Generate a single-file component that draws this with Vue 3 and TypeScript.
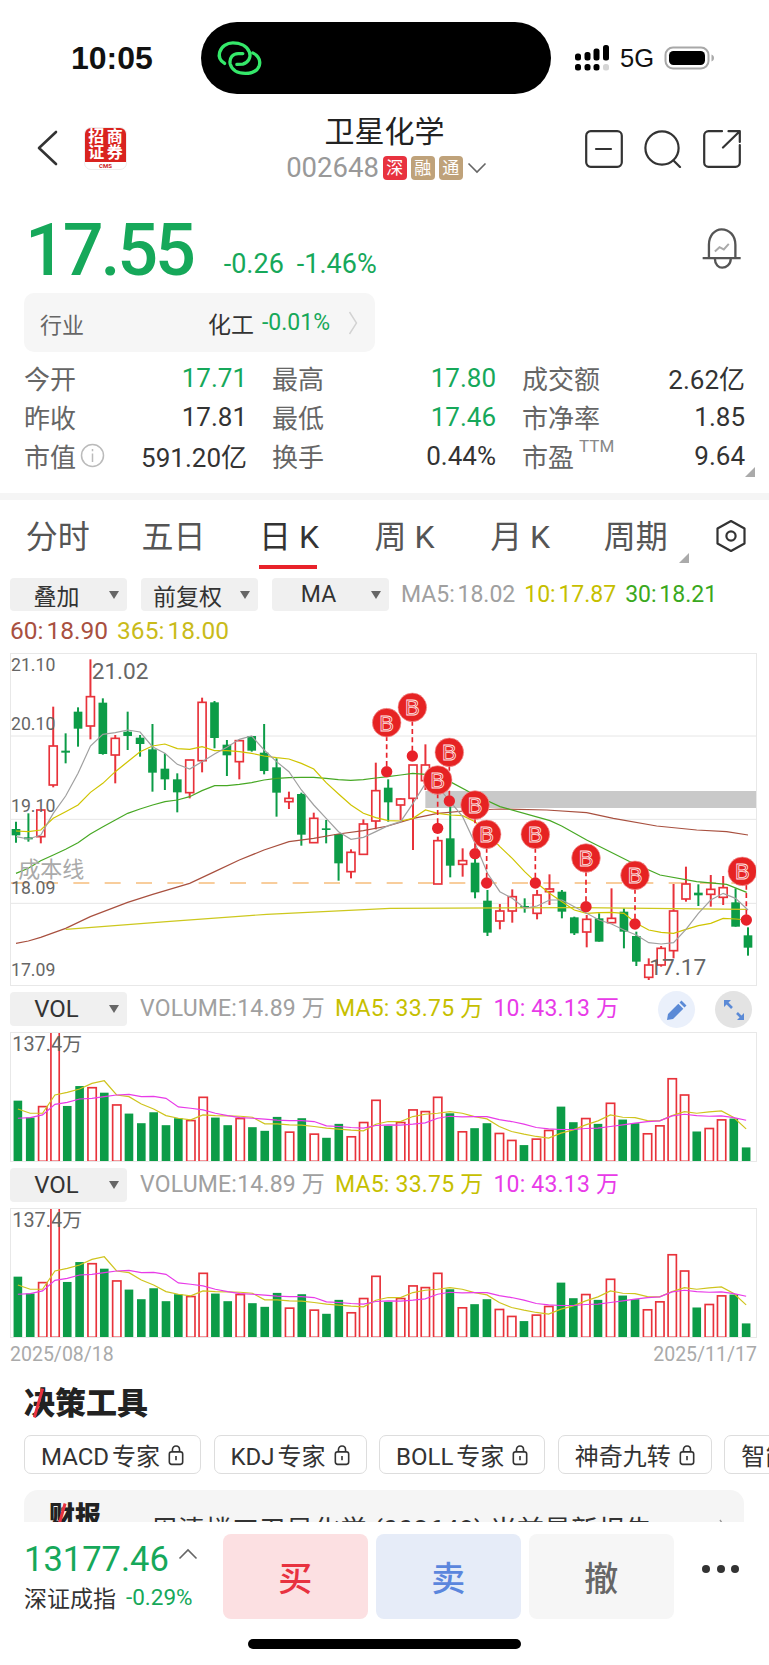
<script setup lang="ts">
type Candle = [number, number, number, number, number]

// wick top, body top, body bottom, wick bottom, up(1)/down(0) - chart units are 1/3 px
const candles: Candle[] = [
  [515, 537, 556, 578, 0], [490, 562, 568, 575, 0], [480, 480, 560, 580, 1], [170, 288, 405, 412, 1],
  [250, 302, 308, 340, 0], [172, 185, 236, 290, 0], [28, 140, 228, 268, 1], [145, 158, 312, 314, 0],
  [255, 265, 315, 400, 1], [185, 245, 258, 300, 0], [255, 263, 282, 320, 0], [222, 298, 368, 425, 0],
  [310, 356, 388, 420, 0], [370, 388, 427, 487, 0], [330, 330, 428, 445, 1], [143, 157, 332, 367, 1],
  [153, 157, 264, 295, 0], [270, 284, 316, 378, 0], [270, 272, 335, 388, 1], [258, 258, 302, 305, 0],
  [222, 308, 363, 373, 0], [325, 352, 428, 500, 0], [425, 445, 455, 477, 1], [428, 432, 554, 587, 0],
  [488, 505, 578, 578, 1], [510, 535, 540, 580, 0], [552, 552, 640, 692, 0], [598, 607, 665, 685, 1],
  [508, 522, 613, 615, 1], [338, 422, 513, 538, 1], [388, 413, 457, 515, 0], [445, 447, 465, 510, 1],
  [345, 345, 445, 600, 1], [283, 345, 392, 420, 1], [560, 572, 702, 702, 1], [470, 565, 647, 682, 0],
  [595, 632, 643, 680, 1], [625, 638, 727, 745, 0], [720, 752, 848, 858, 0], [762, 783, 813, 838, 1],
  [718, 740, 783, 818, 1], [745, 768, 774, 788, 0], [720, 735, 790, 808, 1], [673, 717, 725, 765, 1],
  [720, 725, 785, 805, 0], [800, 802, 850, 855, 0], [795, 808, 846, 892, 1], [790, 805, 875, 875, 0],
  [715, 805, 818, 818, 1], [775, 785, 845, 895, 0], [845, 858, 935, 948, 0], [925, 945, 982, 990, 1],
  [888, 895, 945, 950, 1], [702, 783, 902, 925, 1], [650, 702, 747, 755, 1], [703, 728, 736, 768, 0],
  [675, 718, 733, 770, 1], [678, 713, 742, 765, 1], [715, 757, 830, 830, 0], [832, 856, 893, 917, 0],
]

const cx = (i: number) => 48 + i * 37.22

const ma5Y = [560, 567, 555, 490, 438, 370, 288, 253, 248, 240, 246, 290, 310, 343, 357, 335, 312, 292, 268, 258, 300, 335, 365, 420, 465, 505, 545, 568, 562, 545, 527, 515, 460, 400, 410, 455, 500, 580, 670, 725, 745, 775, 768, 750, 750, 770, 790, 810, 822, 840, 855, 878, 882, 878, 838, 790, 750, 730, 745, 780]
const ma10Y = [543, 545, 540, 505, 485, 465, 427, 400, 365, 335, 305, 288, 282, 296, 298, 290, 302, 302, 305, 310, 318, 323, 327, 340, 357, 398, 432, 465, 490, 503, 512, 513, 505, 480, 490, 495, 497, 515, 550, 590, 625, 665, 700, 730, 755, 780, 790, 788, 787, 790, 820, 840, 847, 850, 838, 827, 820, 805, 807, 810]

const line = (ys: number[]) => ys.map((y, i) => `${cx(i).toFixed(1)},${y}`).join(' ')

const ma30 = '48,670 85,655 122,632 160,615 197,598 234,578 271,552 309,530 346,510 383,490 420,477 458,465 495,455 532,450 569,440 606,422 644,407 681,407 718,403 755,398 792,390 830,385 867,383 904,382 941,382 978,385 1015,389 1052,391 1090,389 1127,384 1164,380 1202,375 1238,370 1276,373 1313,380 1350,395 1425,435 1500,470 1650,512 1685,528 1760,570 1890,635 1980,675 2090,695 2180,703 2240,727'
const ma60 = '48,880 85,873 122,862 197,835 271,800 383,757 458,733 569,700 644,665 718,630 792,600 867,575 941,565 1015,552 1090,542 1164,528 1240,505 1313,490 1425,480 1500,477 1640,480 1760,488 1840,505 1970,528 2090,540 2180,545 2244,555'
const ma365 = '197,838 500,815 800,793 1170,775 1740,773 2240,778'

const signals = [
  { x: 1160, big: 218, dot: 365 }, { x: 1237, big: 172, dot: 318 }, { x: 1348, big: 307, dot: 453 },
  { x: 1313, big: 390, dot: 535 }, { x: 1425, big: 465, dot: 611 }, { x: 1460, big: 553, dot: 699 },
  { x: 1606, big: 553, dot: 699 }, { x: 1758, big: 624, dot: 770 }, { x: 1905, big: 676, dot: 822 },
  { x: 2239, bigX: 2227, big: 664, dot: 810 },
]

const priceLabels = [
  { t: '21.10', x: 33, y: 63 }, { t: '20.10', x: 33, y: 240 }, { t: '19.10', x: 33, y: 487 },
  { t: '18.09', x: 33, y: 733 }, { t: '17.09', x: 33, y: 978 },
]

const volTops = [347, 398, 365, 138, 363, 303, 308, 323, 360, 386, 415, 382, 421, 400, 407, 337, 398, 421, 401, 427, 438, 396, 442, 400, 448, 459, 417, 456, 413, 346, 423, 413, 375, 380, 337, 385, 441, 430, 415, 446, 467, 481, 463, 437, 365, 412, 401, 417, 355, 404, 415, 447, 423, 281, 330, 440, 431, 405, 401, 488]
const volMa5 = [372, 385, 385, 330, 322, 312, 295, 287, 330, 335, 357, 372, 392, 400, 405, 390, 392, 393, 394, 397, 417, 417, 420, 421, 425, 430, 433, 436, 438, 418, 410, 410, 395, 388, 385, 380, 385, 395, 402, 425, 440, 448, 455, 460, 445, 435, 420, 408, 390, 397, 398, 407, 408, 392, 380, 385, 381, 378, 398, 432]
const volMa10 = [400, 398, 390, 358, 352, 342, 340, 335, 330, 328, 335, 334, 340, 366, 370, 375, 385, 392, 398, 400, 403, 406, 407, 407, 410, 423, 425, 428, 430, 422, 420, 421, 418, 414, 400, 394, 396, 395, 395, 404, 410, 418, 428, 432, 434, 434, 431, 430, 425, 420, 415, 410, 408, 393, 388, 392, 394, 393, 398, 406]

const stats = [
  [
    { k: '今开', v: '17.71', c: 'down' },
    { k: '昨收', v: '17.81', c: '' },
    { k: '市值', v: '591.20亿', c: '', info: true },
  ],
  [
    { k: '最高', v: '17.80', c: 'down' },
    { k: '最低', v: '17.46', c: 'down' },
    { k: '换手', v: '0.44%', c: '' },
  ],
  [
    { k: '成交额', v: '2.62亿', c: '' },
    { k: '市净率', v: '1.85', c: '' },
    { k: '市盈', v: '9.64', c: '', ttm: true },
  ],
]

const tabs = ['分时', '五日', '日 K', '周 K', '月 K', '周期']
const chips = ['MACD 专家', 'KDJ 专家', 'BOLL 专家', '神奇九转', '智能']
</script>

<template>
  <div class="page">
    <div class="content">
      <div class="status">
        <span class="time">10:05</span>
        <div class="island">
          <svg width="53" height="43" viewBox="70 50 160 130" fill="none" stroke="#35e86a" stroke-width="10" stroke-linecap="round">
            <path d="M105 130C92 122 86 110 90 96C95 78 112 68 130 68C150 68 172 76 180 96C186 112 176 128 160 132L142 133" />
            <path d="M190 98C206 106 214 120 210 136C204 154 186 160 168 160C148 160 128 152 122 132C118 114 130 100 146 100L160 100" />
          </svg>
        </div>
        <div class="sys">
          <svg width="36" height="26" viewBox="0 0 36 26">
            <g fill="#000">
              <rect x="1" y="8.5" width="6" height="7" rx="2.5" />
              <rect x="10.5" y="7" width="6" height="8.5" rx="2.5" />
              <rect x="19.5" y="3.5" width="6" height="12" rx="2.5" />
              <rect x="29" y="0" width="6" height="15.5" rx="2.5" />
              <rect x="1" y="19" width="6" height="6.5" rx="2.5" />
              <rect x="10.5" y="19" width="6" height="6.5" rx="2.5" />
              <rect x="19.5" y="19" width="6" height="6.5" rx="2.5" />
            </g>
            <rect x="29" y="19" width="6" height="6.5" rx="2.5" fill="#d5d5d5" />
          </svg>
          <span class="net">5G</span>
          <svg width="52" height="24" viewBox="0 0 52 24">
            <rect x="1.5" y="1.5" width="43" height="21" rx="7.5" fill="none" stroke="#a8a8a8" stroke-width="2" />
            <rect x="5" y="5" width="36" height="14" rx="4.5" fill="#000" />
            <path d="M47.5 8.5C49.5 9.5 50 10.5 50 12C50 13.5 49.5 14.5 47.5 15.5Z" fill="#aaa" />
          </svg>
        </div>
      </div>

      <div class="nav">
        <div class="nav-left">
          <svg class="back" width="22" height="36" viewBox="0 0 22 36" fill="none" stroke="#333" stroke-width="2.6" stroke-linecap="round" stroke-linejoin="round">
            <path d="M20 2L3 18L20 34" />
          </svg>
          <div class="logo">
            <div class="logo-top">
              <span>招</span><span>商</span><span>证</span><span>券</span>
            </div>
            <div class="logo-cms">CMS</div>
          </div>
        </div>
        <div class="nav-mid">
          <div class="title">卫星化学</div>
          <div class="code">
            <span>002648</span>
            <i class="tag tag-red">深</i>
            <i class="tag">融</i>
            <i class="tag">通</i>
            <svg width="20" height="12" viewBox="0 0 20 12" fill="none" stroke="#666" stroke-width="1.6">
              <path d="M1.5 1.5L10 10L18.5 1.5" />
            </svg>
          </div>
        </div>
        <div class="nav-right">
          <svg width="38" height="38" viewBox="0 0 38 38" fill="none" stroke="#333" stroke-width="2.2" stroke-linecap="round">
            <rect x="1.2" y="1.2" width="35.6" height="35.6" rx="4.5" />
            <path d="M11 19H26" />
          </svg>
          <svg width="38" height="38" viewBox="0 0 38 38" fill="none" stroke="#333" stroke-width="2.2" stroke-linecap="round">
            <circle cx="18" cy="18" r="16.6" />
            <path d="M29.5 30.5L36 37" />
          </svg>
          <svg width="38" height="38" viewBox="0 0 38 38" fill="none" stroke="#333" stroke-width="2.2" stroke-linecap="round" stroke-linejoin="round">
            <path d="M19 1.2H5.5C3 1.2 1.2 3 1.2 5.5V32.5C1.2 35 3 36.8 5.5 36.8H32.5C35 36.8 36.8 35 36.8 32.5V15" />
            <path d="M20 17.5L36.5 1.5M25.5 1.2H36.8V12" />
          </svg>
        </div>
      </div>

      <div class="quote">
        <span class="price">17.55</span>
        <span class="chg">-0.26</span>
        <span class="chg">-1.46%</span>
        <svg class="bell" width="41" height="43" viewBox="36 25 124 128" fill="none" stroke="#555" stroke-width="7">
          <path d="M60 117V78C60 50 78 31 98 31C122 31 140 50 140 78V117" />
          <path d="M41 118H156" />
          <path d="M78 120C78 138 90 147 100 147C112 147 126 138 126 120" />
          <path d="M78 98L92 85L105 92L120 75" stroke="#aaa" stroke-width="6" />
        </svg>
      </div>

      <div class="industry">
        <span class="ind-label">行业</span>
        <span class="ind-name">化工</span>
        <span class="ind-pct">-0.01%</span>
        <svg width="10" height="24" viewBox="0 0 10 24" fill="none" stroke="#d2d2d2" stroke-width="1.4">
          <path d="M1.5 1L8.5 12L1.5 23" />
        </svg>
      </div>

      <div class="stats">
        <div v-for="(col, i) in stats" :key="i" class="stat-col">
          <div v-for="row in col" :key="row.k" class="stat-row">
            <span class="stat-k">
              {{ row.k }}
              <svg v-if="row.info" class="info" width="25" height="25" viewBox="0 0 25 25" fill="none" stroke="#bbb" stroke-width="1.5">
                <circle cx="12.5" cy="12.5" r="11" />
                <path d="M12.5 10.5V19M12.5 6V8.2" />
              </svg>
              <sup v-if="row.ttm" class="ttm">TTM</sup>
            </span>
            <span class="stat-v" :class="row.c">{{ row.v }}</span>
          </div>
        </div>
        <i class="corner"></i>
      </div>

      <div class="band"></div>

      <div class="tabs">
        <div class="tab-list">
          <div v-for="t in tabs" :key="t" class="tab" :class="{ active: t === '日 K' }">
            {{ t }}
            <i v-if="t === '周期'" class="tab-corner"></i>
          </div>
        </div>
        <svg class="gear" width="32" height="34" viewBox="0 0 32 34" fill="none" stroke="#333" stroke-width="2.2" stroke-linejoin="round">
          <path d="M16 2L29.5 9.5V24.5L16 32L2.5 24.5V9.5Z" />
          <circle cx="16" cy="17" r="4.6" />
        </svg>
      </div>

      <div class="tools">
        <div class="drop"><span>叠加</span><i class="caret"></i></div>
        <div class="drop"><span>前复权</span><i class="caret"></i></div>
        <div class="drop"><span>MA</span><i class="caret"></i></div>
        <div class="legend">
          <span class="c-gray">MA5: 18.02</span>
          <span class="c-yellow">10: 17.87</span>
          <span class="c-green">30: 18.21</span>
        </div>
      </div>
      <div class="legend legend-2">
        <span class="c-brown">60: 18.90</span>
        <span class="c-olive">365: 18.00</span>
      </div>

      <svg class="kchart" viewBox="30 9 2241 999" width="747" height="333">
        <g stroke="#e6e6e6" stroke-width="3">
          <line x1="30" x2="2271" y1="258" y2="258" />
          <line x1="30" x2="2271" y1="508" y2="508" />
          <line x1="30" x2="2271" y1="760" y2="760" />
        </g>
        <rect x="1276" y="423" width="995" height="51" fill="#c9c9c9" />
        <line x1="32" x2="2250" y1="699" y2="699" stroke="#f6bd7c" stroke-width="5" stroke-dasharray="48 46" />

        <g v-for="(c, i) in candles" :key="i">
          <line :x1="cx(i)" :x2="cx(i)" :y1="c[0]" :y2="c[3]" :stroke="c[4] ? '#e8323a' : '#0c9c47'" stroke-width="6" />
          <rect v-if="c[4]" :x="cx(i) - 12" :y="c[1]" width="24" :height="Math.max(c[2] - c[1], 4)" fill="#fff" stroke="#e8323a" stroke-width="5" />
          <rect v-else :x="cx(i) - 13" :y="c[1]" width="26" :height="Math.max(c[2] - c[1], 4)" fill="#0c9c47" />
        </g>

        <g fill="none" stroke-width="3.6">
          <polyline :points="ma60" stroke="#a8503f" />
          <polyline :points="ma365" stroke="#cdc81e" />
          <polyline :points="ma30" stroke="#47a824" />
          <polyline :points="line(ma10Y)" stroke="#cfc400" />
          <polyline :points="line(ma5Y)" stroke="#a0a0a0" />
        </g>

        <g class="axis" fill="#666">
          <text v-for="l in priceLabels" :key="l.t" :x="l.x" :y="l.y" font-size="53">{{ l.t }}</text>
          <text x="275" y="88" font-size="68">21.02</text>
          <text x="1948" y="975" font-size="68">17.17</text>
          <text x="55" y="682" font-size="66" fill="#aaa">成本线</text>
        </g>

        <g v-for="(s, i) in signals" :key="'s' + i">
          <line :x1="s.x" :x2="s.x" :y1="s.big + 40" :y2="s.dot" stroke="#e8222a" stroke-width="5" stroke-dasharray="15 10" />
          <circle :cx="s.x" :cy="s.dot" r="17" fill="#e8222a" />
          <circle :cx="s.bigX ?? s.x" :cy="s.big" r="43" fill="#e62323" stroke="#f3a0a0" stroke-width="2" />
          <text class="b" :x="s.bigX ?? s.x" :y="s.big + 24" font-size="66" text-anchor="middle" fill="#e62323" stroke="#fde8e8" stroke-width="2.4">B</text>
        </g>
      </svg>

      <template v-for="n in 2" :key="n">
        <div class="vol-row">
          <div class="drop drop-vol"><span>VOL</span><i class="caret"></i></div>
          <div class="vol-legend">
            <span class="c-gray">VOLUME:14.89 万</span>
            <span class="c-yellow">MA5: 33.75 万</span>
            <span class="c-pink">10: 43.13 万</span>
          </div>
          <div v-if="n === 1" class="vol-btns">
            <span class="round round-blue">
              <svg width="22" height="22" viewBox="0 0 22 22" fill="#5b8ad6">
                <path d="M15.5 1.5L20.5 6.5L18.5 8.5L13.5 3.5ZM12.3 4.7L17.3 9.7L7 20L1 21L2 15Z" />
              </svg>
            </span>
            <span class="round round-gray">
              <svg width="24" height="24" viewBox="0 0 24 24" fill="none" stroke="#5b8ad6" stroke-width="2.6">
                <path d="M3.5 3.5L10 10M15 15L20.5 20.5" />
                <path d="M2 9V2H9Z M22 15V22H15Z" fill="#5b8ad6" stroke="none" />
              </svg>
            </span>
          </div>
        </div>
        <svg class="vchart" viewBox="30 140 2241 392" width="747" height="130">
          <g v-for="(top, i) in volTops" :key="i">
            <rect v-if="candles[i][4]" :x="cx(i) - 12" :y="top" width="25" :height="530 - top" fill="#fff" stroke="#e8323a" stroke-width="5" />
            <rect v-else :x="cx(i) - 13" :y="top" width="26" :height="531 - top" fill="#0c9c47" />
          </g>
          <text class="axis" x="31" y="197" font-size="60" fill="#666">137.4万</text>
          <g fill="none" stroke-width="3.6">
            <polyline :points="line(volMa5)" stroke="#cfc41e" />
            <polyline :points="line(volMa10)" stroke="#e83be8" />
          </g>
        </svg>
      </template>

      <div class="dates">
        <span>2025/08/18</span>
        <span>2025/11/17</span>
      </div>

      <div class="section-title"><span class="slash">决</span>策工具</div>

      <div class="chips">
        <div v-for="c in chips" :key="c" class="chip">
          {{ c }}
          <svg width="16" height="22" viewBox="0 0 18 24" fill="none" stroke="#333" stroke-width="1.8">
            <rect x="1.5" y="8.5" width="15" height="14" rx="2.5" />
            <path d="M5 8.5V6C5 3.5 6.8 1.8 9 1.8C11.2 1.8 13 3.5 13 6V8.5M9 13V18" />
          </svg>
        </div>
      </div>

      <div class="report">
        <span class="report-tag"><span class="slash slash-sm">财</span>报</span>
        <span class="report-text">周清楼工卫星化学 (002648) 当前最新报告</span>
        <svg class="report-more" width="10" height="20" viewBox="0 0 10 20" fill="none" stroke="#999" stroke-width="1.4">
          <path d="M2 1L8 10L2 19" />
        </svg>
      </div>
    </div>

    <div class="bottom">
      <div class="index">
        <div class="index-top">
          <span class="index-val">13177.46</span>
          <svg width="20" height="12" viewBox="0 0 20 12" fill="none" stroke="#666" stroke-width="1.6">
            <path d="M1.5 10.5L10 2L18.5 10.5" />
          </svg>
        </div>
        <div class="index-sub">
          <span>深证成指</span>
          <span class="index-pct">-0.29%</span>
        </div>
      </div>
      <div class="btn btn-buy">买</div>
      <div class="btn btn-sell">卖</div>
      <div class="btn btn-undo">撤</div>
      <div class="more"><i></i><i></i><i></i></div>
    </div>
    <div class="home-bar"></div>
  </div>
</template>

<style>
html, body { margin: 0; background: #fff; }
</style>

<style scoped>
.page {
  width: 769px;
  height: 1665px;
  background: #fff;
  overflow: hidden;
  position: relative;
  font-family: Roboto, "Noto Sans CJK SC", sans-serif;
  color: #333;
  display: flex;
  flex-direction: column;
}
.content {
  height: 1522px;
  overflow: hidden;
  flex-shrink: 0;
}
i { font-style: normal; }

/* Status bar */
.status {
  height: 72px;
  padding-top: 22px;
  display: flex;
  align-items: center;
}
.time {
  margin-left: 71px;
  width: 82px;
  font-size: 32px;
  font-weight: 700;
  color: #111;
  white-space: nowrap;
  font-family: "Liberation Sans", sans-serif;
}
.island {
  margin-left: 48px;
  width: 350px;
  height: 72px;
  border-radius: 36px;
  background: #000;
  display: flex;
  align-items: center;
  padding-left: 12px;
  box-sizing: border-box;
}
.sys {
  margin-left: 23px;
  display: flex;
  align-items: center;
  gap: 10px;
}
.net {
  font-family: "Liberation Sans", sans-serif;
  font-size: 25.5px;
  color: #111;
  width: 34px;
}

/* Header */
.nav {
  height: 85px;
  margin-top: 20px;
  display: grid;
  grid-template-columns: 1fr auto 1fr;
}
.nav-left {
  display: flex;
  align-items: flex-start;
  padding-left: 36px;
}
.back { margin-top: 16px; }
.logo {
  margin-left: 26px;
  margin-top: 13px;
  width: 43px;
  height: 43px;
  border-radius: 7px;
  overflow: hidden;
  border: 1px solid #eee;
  box-sizing: border-box;
  display: flex;
  flex-direction: column;
  background: #fff;
}
.logo-top {
  flex: 1;
  background: #d9231f;
  display: grid;
  grid-template-columns: 1fr 1fr;
  align-items: center;
  justify-items: center;
  color: #fff;
  font-size: 16px;
  line-height: 16px;
  font-weight: 700;
  padding: 1px 2px;
}
.logo-cms {
  height: 8px;
  line-height: 8px;
  text-align: center;
  font-size: 6px;
  font-weight: 700;
  color: #c22;
}
.nav-mid {
  display: flex;
  flex-direction: column;
  align-items: center;
}
.title {
  font-size: 30px;
  line-height: 36px;
  color: #222;
}
.code {
  margin-top: 5px;
  display: flex;
  align-items: center;
  gap: 4px;
  font-size: 27.5px;
  line-height: 26px;
  color: #999;
  transform: translateX(2px);
}
.tag {
  width: 24px;
  height: 24px;
  border-radius: 4px;
  background: #bfa27a;
  color: #fff;
  font-size: 17px;
  line-height: 24px;
  text-align: center;
}
.tag-red { background: #e8323f; }
.code svg { margin-left: 0; }
.nav-right {
  display: flex;
  justify-content: flex-end;
  gap: 21px;
  padding: 16px 28px 0 0;
  align-items: flex-start;
}

/* Price */
.quote {
  height: 82px;
  margin-top: 12px;
  display: flex;
  align-items: flex-end;
  padding: 0 27px 0 25px;
  box-sizing: border-box;
}
.price {
  font-size: 72px;
  line-height: 84px;
  font-weight: 500;
  letter-spacing: -3.2px;
  color: #16a85a;
  margin-right: 31px;
}
.chg {
  font-size: 27px;
  line-height: 34px;
  color: #16a85a;
  margin-right: 13px;
  margin-bottom: 12px;
}
.bell { margin: 0 0 23px auto; }

.industry {
  margin: 0 0 0 24px;
  width: 351px;
  height: 59px;
  border-radius: 10px;
  background: #f6f6f6;
  display: flex;
  align-items: center;
  padding: 0 17px 0 16px;
  box-sizing: border-box;
}
.ind-label { font-size: 22px; color: #666; }
.ind-name { font-size: 23px; color: #333; margin-left: auto; }
.ind-pct { font-size: 23px; color: #16a85a; margin: 0 18px 0 8px; }

.stats {
  margin-top: 6px;
  padding: 0 24px 0 24px;
  display: grid;
  grid-template-columns: 223px 223px 223px;
  column-gap: 26px;
  position: relative;
  height: 135px;
}
.stat-col { display: flex; flex-direction: column; }
.stat-col:nth-child(2) { margin-left: -1px; }
.stat-row {
  height: 39px;
  display: flex;
  justify-content: space-between;
  align-items: center;
  font-size: 26px;
}
.stat-k {
  color: #666;
  display: flex;
  align-items: center;
  font-size: 26px;
  position: relative;
}
.info { margin-left: 4px; }
.ttm {
  font-size: 17px;
  color: #888;
  margin-left: 5px;
  position: relative;
  top: -9px;
  line-height: 1;
  vertical-align: baseline;
}
.stat-v { color: #333; }
.stat-v.down { color: #16a85a; }
.corner {
  position: absolute;
  right: 14px;
  bottom: 16px;
  width: 0;
  height: 0;
  border-style: solid;
  border-width: 0 0 10px 10px;
  border-color: transparent transparent #aaa transparent;
}
.band { height: 7px; background: #f5f5f5; }

/* Tabs */
.tabs {
  height: 69px;
  display: flex;
  align-items: flex-start;
  position: relative;
}
.tab-list {
  display: grid;
  grid-template-columns: repeat(6, 115.6px);
  width: 694px;
}
.tab {
  font-size: 32px;
  line-height: 40px;
  padding-top: 17px;
  height: 69px;
  box-sizing: border-box;
  text-align: center;
  color: #555;
  position: relative;
}
.tab.active { color: #333; }
.tab.active::after {
  content: "";
  position: absolute;
  left: 28px;
  width: 58px;
  bottom: 0;
  height: 4px;
  background: #e8222a;
}
.tab-corner {
  position: absolute;
  right: 5px;
  top: 53px;
  width: 0;
  height: 0;
  border-style: solid;
  border-width: 0 0 10px 10px;
  border-color: transparent transparent #aaa transparent;
}
.gear { margin: 19px 0 0 21px; }

/* Dropdowns */
.tools {
  margin-top: 9px;
  padding-left: 10px;
  display: flex;
  align-items: center;
  gap: 14px;
}
.drop {
  width: 117px;
  height: 33px;
  border-radius: 4px;
  background: #f0f0f0;
  display: flex;
  align-items: center;
  justify-content: center;
  font-size: 23px;
  color: #333;
  position: relative;
  padding-right: 24px;
  box-sizing: border-box;
}
.caret {
  position: absolute;
  right: 8px;
  top: 13px;
  width: 0;
  height: 0;
  border-style: solid;
  border-width: 8px 5.5px 0 5.5px;
  border-color: #666 transparent transparent transparent;
}
.legend {
  display: flex;
  gap: 9px;
  font-size: 23px;
  line-height: 30px;
  margin-left: -2px;
  white-space: nowrap;
  word-spacing: -3px;
}
.legend-2 {
  margin: 5px 0 0 10px;
  height: 30px;
  font-size: 24.5px;
  gap: 9px;
  word-spacing: -3px;
}
.c-gray { color: #a0a0a0; }
.c-yellow { color: #c6bf00; }
.c-green { color: #3aa820; }
.c-brown { color: #a8503f; }
.c-olive { color: #c9bb1a; }
.c-pink { color: #e83be8; }

.kchart, .vchart {
  display: block;
  margin-left: 10px;
  outline: 1px solid #e8e8e8;
  outline-offset: -1px;
}
.kchart { margin-top: 7px; }
.axis text, text.axis { font-family: Roboto, "Noto Sans CJK SC", sans-serif; }
.b { font-family: "Liberation Sans", sans-serif; }

.vol-row {
  height: 46px;
  padding: 6px 0 0 10px;
  box-sizing: border-box;
  display: flex;
  align-items: flex-start;
}
.drop-vol {
  height: 34px;
  flex-shrink: 0;
  font-size: 24px;
}
.vol-legend {
  margin-left: 13px;
  display: flex;
  gap: 10px;
  font-size: 23px;
  letter-spacing: 0.2px;
  line-height: 34px;
  white-space: nowrap;
}
.vol-btns {
  position: absolute;
  left: 658px;
  display: flex;
  gap: 20px;
  margin-top: -1px;
}
.round {
  width: 37px;
  height: 37px;
  border-radius: 50%;
  display: flex;
  align-items: center;
  justify-content: center;
}
.round-blue { background: #eaf0fb; }
.round-gray { background: #e3e3e3; }

.dates {
  margin-top: 4px;
  padding: 0 12px 0 10px;
  display: flex;
  justify-content: space-between;
  font-size: 19.5px;
  line-height: 26px;
  color: #aaa;
}

.section-title {
  margin: 16px 0 0 24px;
  font-size: 31px;
  line-height: 40px;
  font-weight: 900;
  color: #222;
}
.slash { position: relative; display: inline-block; }
.slash::after {
  content: "";
  position: absolute;
  left: 13px;
  top: 4px;
  width: 3px;
  height: 30px;
  background: #e8323f;
  transform: rotate(16deg);
}
.chips {
  margin-top: 11px;
  padding-left: 24px;
  display: flex;
  gap: 12.5px;
  width: 1000px;
}
.chip {
  height: 39px;
  padding: 0 16px;
  box-sizing: border-box;
  border: 1px solid #ddd;
  border-radius: 7px;
  display: flex;
  align-items: center;
  gap: 8px;
  font-size: 24px;
  white-space: nowrap;
  color: #333;
  word-spacing: -3px;
}
.report {
  margin: 16px 0 0 24px;
  width: 720px;
  height: 90px;
  background: #f5f5f5;
  border-radius: 14px;
  padding: 11px 0 0 25px;
  box-sizing: border-box;
  display: flex;
  gap: 50px;
  align-items: flex-start;
  position: relative;
}
.report-tag {
  font-size: 26px;
  line-height: 30px;
  font-weight: 900;
  color: #222;
}
.slash-sm::after { height: 26px; left: 11px; top: 2px; }
.report-text {
  font-size: 27px;
  line-height: 36px;
  margin-top: 12px;
  color: #333;
  white-space: nowrap;
}
.report-more {
  position: absolute;
  right: 16px;
  top: 29px;
}

/* Bottom bar */
.bottom {
  height: 97px;
  padding: 12px 0 0 24px;
  box-sizing: border-box;
  display: flex;
  background: #fff;
}
.index { width: 199px; flex-shrink: 0; }
.index-top {
  display: flex;
  align-items: center;
  gap: 9px;
  height: 41px;
  padding-top: 4px;
}
.index-val { font-size: 34.5px; color: #16a85a; }
.index-top svg { margin-top: -10px; }
.index-sub {
  margin-top: 1px;
  display: flex;
  gap: 10px;
  align-items: center;
  font-size: 23px;
  color: #333;
  white-space: nowrap;
}
.index-pct { color: #16a85a; font-size: 22.5px; }
.btn {
  width: 144.5px;
  height: 85px;
  border-radius: 8px;
  margin-right: 8.5px;
  display: flex;
  align-items: center;
  justify-content: center;
  font-size: 34px;
  font-weight: 500;
  flex-shrink: 0;
}
.btn-buy { background: #fce0e2; color: #e8323f; }
.btn-sell { background: #e6ecf8; color: #5b86dd; }
.btn-undo { background: #f6f6f6; color: #666; }
.more {
  margin: 31px 0 0 20px;
  display: flex;
  gap: 6.5px;
  height: 8px;
}
.more i {
  width: 8px;
  height: 8px;
  border-radius: 50%;
  background: #333;
}
.home-bar {
  margin: 20px 0 0 248px;
  width: 273px;
  height: 10px;
  border-radius: 5px;
  background: #000;
}
</style>
